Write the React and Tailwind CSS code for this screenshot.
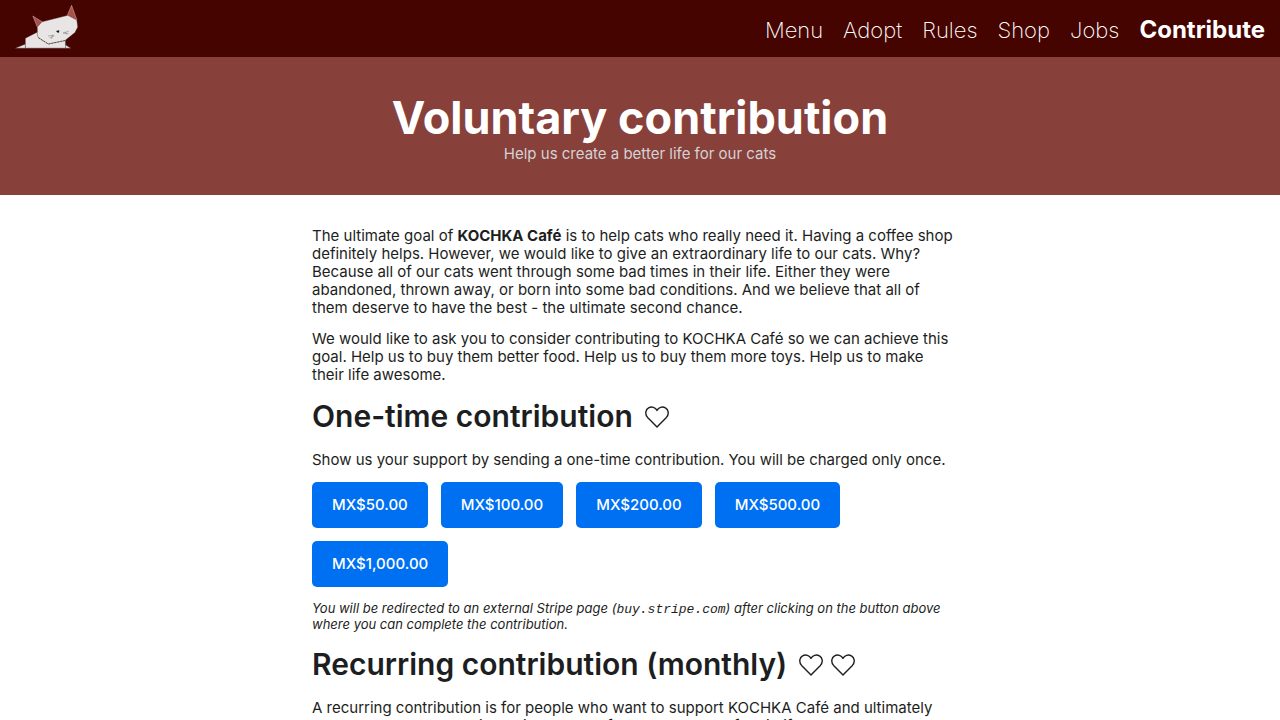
const NAV = ['Menu', 'Adopt', 'Rules', 'Shop', 'Jobs'];
const AMOUNTS = ['MX$50.00', 'MX$100.00', 'MX$200.00', 'MX$500.00', 'MX$1,000.00'];

function CatLogo() {
  return (
    <svg viewBox="15 5 64 47" className="h-[47px] w-16" role="img" aria-label="Kochka">
      <g stroke="#3a1a18" strokeWidth="0.4" strokeLinejoin="round">
        <path d="M15 48.2 L25.5 44 V48.2Z" fill="#ece6e6" />
        <path d="M65 44.5 L71 48.2 H65Z" fill="#ece6e6" />
        <path d="M25.3 48.2 V38.2 L37.5 32 L65.5 38 V48.2Z" fill="#e9e3e3" />
        <path d="M32.8 16 L42.5 22 L37.5 27.5Z" fill="#ab4f49" stroke="#e6d8d6" />
        <path d="M71.6 5.3 L67.2 15.6 L77 20.2Z" fill="#ab4f49" stroke="#e6d8d6" />
        <path d="M42 21.8 L67.8 15.3 L76.8 20 L77.8 27 L75 32.5 L65 40.5 L48.3 44 L38.3 37.5 L37.3 35 V27Z" fill="#eae5e5" />
      </g>
      <path d="M38.3 37.7 L48.3 44 L65 40.6" stroke="#222" strokeWidth="0.6" strokeDasharray="2 1" fill="none" />
      <path d="M56 31 L59.3 30.3 L59 32.6 L57.8 32.8Z" fill="#111" />
      <path d="M48 36 L54 35.2 M49.5 38 L54.5 35.8 M51.5 39 L52.5 34.8 M63 33 L69 31.2 M63 33.2 L68.5 33.6 M65 31.8 L67 34.6" stroke="#777" strokeWidth="0.5" fill="none" />
    </svg>
  );
}

function Heart() {
  return (
    <svg viewBox="0 0 24 22" className="h-[22px] w-6" fill="none" stroke="currentColor" strokeWidth="1.4" strokeLinejoin="round" aria-hidden="true">
      <path d="M12 21 L2.6 11.4 C-0.4 8 0.6 3.4 3.6 1.8 C6.8 0.2 10.4 1.4 12 4.4 C13.6 1.4 17.2 0.2 20.4 1.8 C23.4 3.4 24.4 8 21.4 11.4Z" />
    </svg>
  );
}

function Title({ children, hearts }) {
  return (
    <h2 className="flex items-center gap-3 pb-[2px] text-[30px] leading-[39px] font-semibold">
      {children}
      <span className="flex gap-2">
        {Array.from({ length: hearts }, (_, i) => <Heart key={i} />)}
      </span>
    </h2>
  );
}

export default function App() {
  return (
    <div className="h-screen overflow-hidden bg-white font-['Inter','Liberation_Sans',sans-serif] text-[15px] leading-[18px] text-[#1c1e21]">
      <header className="flex items-center justify-between bg-[#450400] px-[15px] py-[5px]">
        <a href="#home"><CatLogo /></a>
        <nav className="flex items-baseline gap-5 pt-[2px] leading-8 text-white">
          {NAV.map((n) => <a key={n} href={'#' + n.toLowerCase()} className="text-[22px] font-extralight">{n}</a>)}
          <a href="#contribute" className="text-2xl leading-8 font-bold">Contribute</a>
        </nav>
      </header>
      <div className="bg-[#88403b] pt-[34px] pb-8 text-center">
        <h1 className="text-[45px] leading-[54px] font-bold text-white">Voluntary contribution</h1>
        <p className="text-[#d3d3d3]">Help us create a better life for our cats</p>
      </div>
      <main className="mx-auto flex max-w-[656px] flex-col gap-[13px] pt-8">
        <p>
          The ultimate goal of <strong>KOCHKA Café</strong> is to help cats who really need it. Having a coffee shop definitely helps. However, we would like to give an extraordinary life to our cats. Why? Because all of our cats went through some bad times in their life. Either they were abandoned, thrown away, or born into some bad conditions. And we believe that all of <br className="hidden md:block" />them deserve to have the best - the ultimate second chance.
        </p>
        <p>
          We would like to ask you to consider contributing to KOCHKA Café so we can achieve this goal. Help us to buy them better food. Help us to buy them more toys. Help us to make <br className="hidden md:block" />their life awesome.
        </p>
        <Title hearts={1}>One-time contribution</Title>
        <p>Show us your support by sending a one-time contribution. You will be charged only once.</p>
        <div className="flex flex-wrap gap-[13px]">
          {AMOUNTS.map((a) => (
            <button key={a} type="button" className="h-[46px] rounded-[5px] bg-[#0070f3] px-5 font-medium text-white">{a}</button>
          ))}
        </div>
        <p className="text-[13px] leading-4 italic">
          You will be redirected to an external Stripe page (<code className="font-['Liberation_Mono',monospace] leading-none">buy.stripe.com</code>) after clicking on the button above where you can complete the contribution.
        </p>
        <Title hearts={2}>Recurring contribution (monthly)</Title>
        <p>A recurring contribution is for people who want to support KOCHKA Café and ultimately <br className="hidden md:block" />our cats every month with their care, comfort and the rest of their life.</p>
      </main>
    </div>
  );
}
